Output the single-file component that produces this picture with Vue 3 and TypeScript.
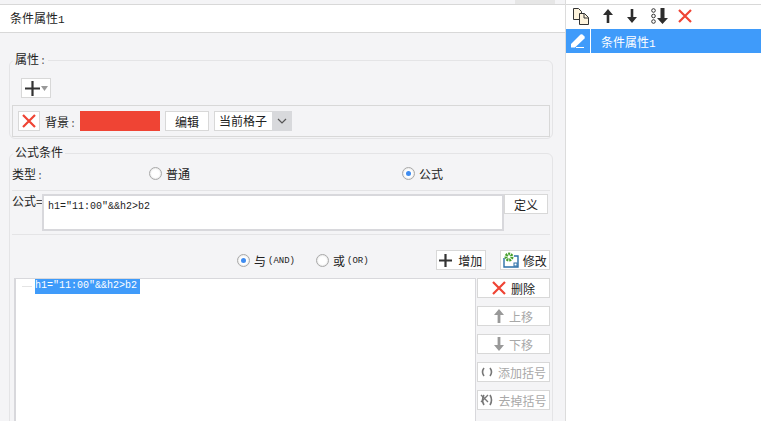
<script setup lang="ts">
const moves = [
  { label: '上移', kind: 'up' },
  { label: '下移', kind: 'down' }
]
</script>

<template>
  <div class="app">
    <main class="left">
      <div class="strip"><div class="strip-dark"></div></div>
      <header class="title">条件属性<span class="lat">1</span></header>
      <div class="body">
        <fieldset class="group attrs">
          <legend>属性<span class="lat colon">:</span></legend>
          <button class="add-btn">
            <svg width="15" height="15" viewBox="0 0 15 15"><path d="M7.500 0v15M0 7.500h15" stroke="#333" stroke-width="2.200" /></svg>
            <svg width="7" height="5" viewBox="0 0 7 5"><path d="M0 0h7L3.500 5z" fill="#999" /></svg>
          </button>
          <div class="bg-row">
            <button class="x-btn">
              <svg width="14" height="14" viewBox="0 0 14 14"><path d="M1 1l12 12M13 1L1 13" stroke="#ef4434" stroke-width="2.200" /></svg>
            </button>
            <span class="bg-label">背景<span class="lat colon">:</span></span>
            <span class="swatch"></span>
            <button class="btn edit">编辑</button>
            <div class="select">
              <span>当前格子</span>
              <span class="arrow"><svg width="10" height="6" viewBox="0 0 10 6"><path d="M1 1l4 4 4-4" fill="none" stroke="#555" stroke-width="1.200" /></svg></span>
            </div>
          </div>
        </fieldset>

        <fieldset class="group formula">
          <legend>公式条件</legend>
          <div class="type-row">
            <span class="type-label">类型<span class="lat colon">:</span></span>
            <label class="radio r1"><i class="dot"></i>普通</label>
            <label class="radio r2"><i class="dot on"></i>公式</label>
          </div>
          <div class="formula-row">
            <span class="f-label">公式=</span>
            <div class="f-input">h1="11:00"&amp;&amp;h2&gt;b2</div>
            <button class="btn define">定义</button>
          </div>
          <div class="logic-row">
            <label class="radio and"><i class="dot on"></i>与<span class="small">(AND)</span></label>
            <label class="radio or"><i class="dot"></i>或<span class="small">(OR)</span></label>
            <button class="btn act add">
              <svg width="13" height="13" viewBox="0 0 13 13"><path d="M6.500 0v13M0 6.500h13" stroke="#333" stroke-width="2.200" /></svg>
              增加
            </button>
            <button class="btn act mod">
              <svg width="16" height="16" viewBox="0 0 16 16">
                <path d="M1 6v9h14V4h-4" fill="none" stroke="#2a6fa8" stroke-width="1.400" />
                <circle cx="6" cy="5" r="3" fill="#fff" stroke="#46a02c" stroke-width="3" stroke-dasharray="1.800 0.800" />
                <rect x="11" y="11" width="3" height="3" fill="#fff" stroke="#2a6fa8" />
              </svg>
              修改
            </button>
          </div>
          <div class="list-row">
            <div class="tree">
              <span class="branch"></span><span class="node">h1="11:00"&amp;&amp;h2&gt;b2</span>
            </div>
            <div class="side">
              <button class="btn side-btn">
                <svg width="14" height="14" viewBox="0 0 14 14"><path d="M1 1l12 12M13 1L1 13" stroke="#ef4434" stroke-width="2.200" /></svg>
                删除
              </button>
              <button v-for="m in moves" :key="m.kind" class="btn side-btn off">
                <svg width="10" height="14" viewBox="0 0 10 14">
                  <path v-if="m.kind === 'up'" d="M5 0l5 6H6.400v8H3.600V6H0z" fill="#999" />
                  <path v-else d="M5 14l5-6H6.400V0H3.600v8H0z" fill="#999" />
                </svg>
                {{ m.label }}
              </button>
              <button class="btn side-btn off">
                <svg width="12" height="10" viewBox="0 0 12 10"><path d="M3 1Q0 5 3 9M9 1q3 4 0 8" fill="none" stroke="#777" stroke-width="1.600" /></svg>
                添加括号
              </button>
              <button class="btn side-btn off">
                <svg width="13" height="12" viewBox="0 0 13 12"><path d="M4 1Q1 6 4 11M10 1q3 5 0 10" fill="none" stroke="#777" stroke-width="1.600" /><path d="M1 1l7 7M8 1L1 8" stroke="#777" stroke-width="1.400" /></svg>
                去掉括号
              </button>
            </div>
          </div>
        </fieldset>
      </div>
    </main>
    <aside class="right">
      <div class="toolbar">
        <svg width="16" height="17" viewBox="0 0 16 17">
          <path d="M.5.500h5l3 3v8h-8z" fill="#fdf3dc" stroke="#333" />
          <path d="M6.500 5.500h5l4 4v7h-9z" fill="#fdf3dc" stroke="#333" />
          <path d="M11 5.500v4.500h4.500" fill="none" stroke="#333" />
        </svg>
        <svg width="10" height="14" viewBox="0 0 10 14"><path d="M5 0l5 6H6.300v8H3.700V6H0z" fill="#2d2d2d" /></svg>
        <svg width="10" height="14" viewBox="0 0 10 14"><path d="M5 14l5-6H6.300V0H3.700v8H0z" fill="#2d2d2d" /></svg>
        <svg width="17" height="16" viewBox="0 0 17 16">
          <circle cx="2.500" cy="2.500" r="1.800" fill="none" stroke="#333" /><circle cx="2.500" cy="8" r="1.800" fill="none" stroke="#333" /><circle cx="2.500" cy="13.500" r="1.800" fill="none" stroke="#333" />
          <path d="M11.500 16l5.500-6h-3.500V0h-4v10H6z" fill="#2d2d2d" />
        </svg>
        <svg class="tool-x" width="14" height="14" viewBox="0 0 14 14"><path d="M1 1l12 12M13 1L1 13" stroke="#ef4434" stroke-width="2.200" /></svg>
      </div>
      <div class="item">
        <span class="pen">
          <svg width="14" height="14" viewBox="0 0 14 14"><path d="M0 10L9.500.500q1-.5 2 0l2 2q.5 1 0 2L4 13.500H0z" fill="#fff" /><path d="M5 13.500h8" stroke="#fff" /></svg>
        </span>
        <span class="item-text">条件属性<span class="lat">1</span></span>
      </div>
    </aside>
  </div>
</template>

<style>
html, body { margin: 0; background: #fff; overflow: hidden; }
</style>

<style scoped>
.app { width: 761px; height: 421px; display: flex; overflow: hidden; font: 12px "Noto Sans CJK SC", "Liberation Sans", sans-serif; color: #222; }
.lat { font: 11px "Liberation Mono", monospace; }
.colon { font-size: 10px; color: #555; margin-left: 1px; }
.left { width: 566px; height: 421px; flex: none; background: #f4f4f6; border-right: 1px solid #dcdcdc; box-sizing: border-box; overflow: hidden; }
.strip { box-sizing: border-box; height: 5px; background: #f4f4f6; border-bottom: 1px solid #d8d8d8; display: flex; justify-content: flex-end; padding-right: 10px; }
.strip-dark { width: 40px; background: #e6e6e6; }
.title { box-sizing: border-box; height: 28px; background: #fff; border-bottom: 1px solid #d8d8d8; padding-left: 10px; line-height: 25px; }
.body { padding: 19px 12px 0 9px; }
.group { margin: 0; padding: 0; border: 1px solid #e4e4e6; border-radius: 6px; min-width: 0; }
.group legend { padding: 0 2px 2px; margin-left: 1px; line-height: 14px; }
.attrs { height: 87px; box-sizing: border-box; padding: 9px 2px 0 2px; }
.add-btn { display: flex; width: 30px; height: 20px; margin-left: 9px; padding: 0; align-items: center; justify-content: center; gap: 1px; background: #fff; border: 1px solid #d8d8d8; box-sizing: border-box; }
.bg-row { margin-top: 7px; height: 32px; box-sizing: border-box; border: 1px solid #d8d8d8; display: flex; align-items: center; padding-left: 5px; }
.x-btn { display: flex; width: 22px; height: 20px; padding: 0; background: #fff; border: 1px solid #d8d8d8; box-sizing: border-box; align-items: center; justify-content: center; }
.bg-label { margin-left: 5px; width: 35px; }
.swatch { width: 80px; height: 20px; background: #ef4434; }
.btn { font: inherit; color: #222; background: #fff; border: 1px solid #d8d8d8; box-sizing: border-box; padding: 0; display: flex; align-items: center; justify-content: center; }
.edit { width: 44px; height: 20px; margin-left: 5px; }
.select { width: 78px; height: 20px; margin-left: 5px; display: flex; box-sizing: border-box; background: #fff; border: 1px solid #d8d8d8; border-right: 0; padding-left: 4px; line-height: 18px; justify-content: space-between; }
.arrow { width: 20px; margin: -1px 0; background: #d8d9dc; display: flex; align-items: center; justify-content: center; }
.formula { margin-top: 6px; height: 300px; box-sizing: border-box; padding: 0 0 0 2px; }
.type-row { box-sizing: border-box; height: 30px; padding-bottom: 5px; display: flex; align-items: center; border-bottom: 1px solid #e4e4e6; width: 538px; }
.radio { display: flex; align-items: center; gap: 4px; }
.r1 { margin-left: 137px; }
.r2 { margin-left: 212px; }
.type-label { width: 0; white-space: nowrap; }
.dot { width: 11px; height: 11px; border-radius: 50%; background: #fff; border: 1px solid #a8a8a8; box-shadow: inset 0 0 2px #ccc; display: block; position: relative; }
.dot.on::after { content: ""; position: absolute; left: 3px; top: 3px; width: 5px; height: 5px; border-radius: 50%; background: #3f8cf0; }
.formula-row { height: 44px; display: flex; align-items: flex-start; padding-top: 3px; width: 538px; border-bottom: 1px solid #e4e4e6; box-sizing: border-box; }
.f-label { width: 30px; flex: none; line-height: 14px; white-space: nowrap; }
.f-input { width: 462px; height: 37px; flex: none; box-sizing: border-box; background: #fff; border: 2px solid #d8d8dc; padding: 4px; font: 10px/14px "Liberation Mono", monospace; }
.define { width: 44px; height: 20px; flex: none; }
.logic-row { box-sizing: border-box; height: 43px; display: flex; align-items: flex-end; padding-bottom: 8px; }
.logic-row .radio { height: 20px; }
.and { margin-left: 225px; }
.or { margin-left: 21px; }
.small { font: 9px/12px "Liberation Mono", monospace; margin: 2px 0 0 -2px; }
.act { height: 20px; width: 50px; box-sizing: border-box; }
.add { gap: 6px; margin-left: 67px; }
.mod { gap: 4px; margin-left: 14px; }
.list-row { display: flex; align-items: flex-start; margin-left: 2px; }
.tree { width: 462px; height: 160px; flex: none; background: #fff; border: 1px solid #d8d8dc; border-left-width: 2px; border-bottom: 0; box-sizing: border-box; display: flex; align-items: flex-start; padding-left: 6px; }
.branch { width: 10px; height: 1px; background: #e4e4e4; margin: 7px 3px 0 0; }
.node { background: #3f9bfa; color: #fff; height: 15px; width: 105px; font: 10px/14px "Liberation Mono", monospace; }
.side { display: flex; flex-direction: column; gap: 8px; margin-left: 1px; }
.side-btn { width: 73px; height: 20px; gap: 5px; }
.off { color: #a8a8a8; }
.right { flex: 1; background: #fff; }
.toolbar { height: 25px; box-sizing: border-box; border-top: 1px solid #d8d8d8; margin-top: 4px; display: flex; align-items: center; gap: 14px; padding: 0 0 2px 7px; }
.tool-x { margin-left: -4px; }
.item { height: 24px; background: #3f9bfa; color: #fff; display: flex; align-items: center; }
.pen { width: 24px; height: 24px; display: flex; align-items: center; justify-content: center; border-right: 1px solid #fff; }
.item-text { margin-left: 10px; }
</style>
